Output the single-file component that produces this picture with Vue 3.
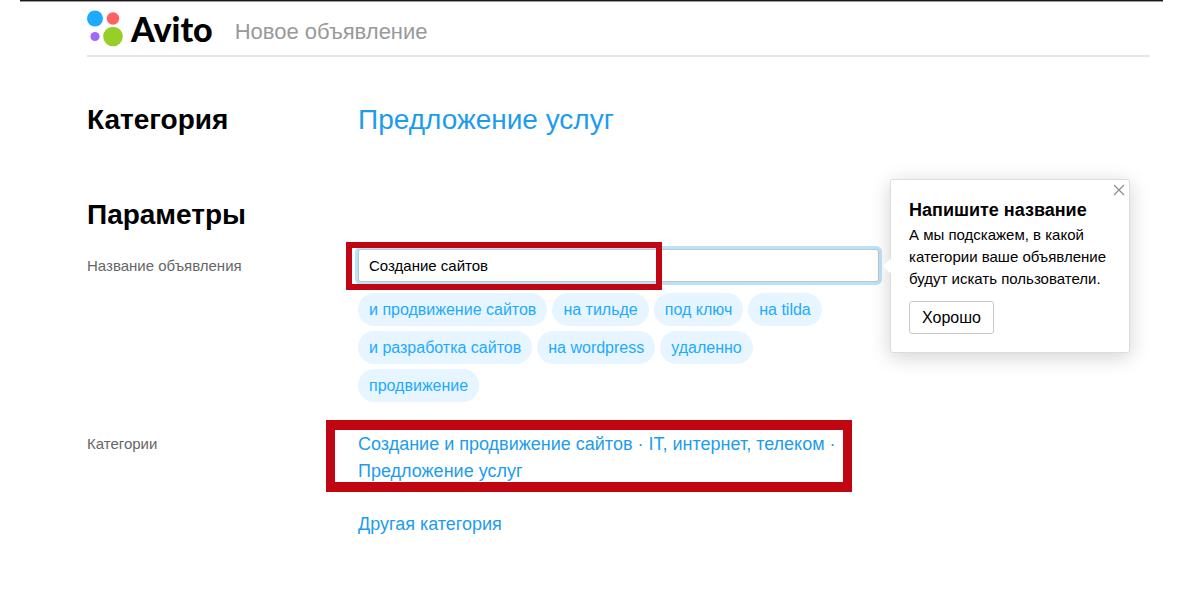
<template>
  <div class="page">
    <div class="top-line"></div>

    <!-- Header -->
    <header class="header">
      <a href="#" class="logo" @click.prevent>
        <svg class="logo-dots" width="37" height="37" viewBox="0 0 37 37" aria-hidden="true">
          <circle cx="8" cy="8.5" r="8" fill="#1eaaff" />
          <circle cx="26" cy="8.5" r="6.2" fill="#ff6163" />
          <circle cx="8" cy="26.5" r="4.6" fill="#a169f7" />
          <circle cx="26" cy="26.5" r="9.8" fill="#97cf26" />
        </svg>
        <span class="logo-name">Avito</span>
      </a>
      <span class="header-title">Новое объявление</span>
    </header>

    <main class="content">
      <!-- Category -->
      <section class="row category-row">
        <h2 class="heading">Категория</h2>
        <a href="#" class="category-link" @click.prevent>Предложение услуг</a>
      </section>

      <!-- Parameters -->
      <h2 class="heading params-heading">Параметры</h2>

      <section class="row">
        <label for="title" class="label title-label">Название объявления</label>
        <div>
          <div class="field">
            <input id="title" v-model="title" type="text" class="title-input" />
            <div class="mark mark-title"></div>

            <!-- Hint -->
            <div v-if="hintVisible" class="hint">
              <button type="button" class="hint-close" aria-label="Закрыть" @click="closeHint">
                <svg width="12" height="12" viewBox="0 0 12 12">
                  <path d="M1 1L11 11M11 1L1 11" stroke="#8c8c8c" stroke-width="1.2" fill="none" />
                </svg>
              </button>
              <h3 class="hint-title">Напишите название</h3>
              <p class="hint-text">А мы подскажем, в какой категории ваше объявление будут искать пользователи.</p>
              <button type="button" class="hint-ok" @click="closeHint">Хорошо</button>
            </div>
          </div>

          <div class="tags">
            <button v-for="tag in tags" :key="tag" type="button" class="tag" @click="addTag(tag)">{{ tag }}</button>
          </div>
        </div>
      </section>

      <section class="row categories-row">
        <span class="label categories-label">Категории</span>
        <div class="categories">
          <a href="#" class="link" @click.prevent>{{ path.join(' · ') }}</a>
          <a href="#" class="link" @click.prevent>Другая категория</a>
          <div class="mark mark-categories"></div>
        </div>
      </section>
    </main>
  </div>
</template>

<script setup>
import { ref } from 'vue'

const title = ref('Создание сайтов')
const hintVisible = ref(true)

const tags = [
  'и продвижение сайтов',
  'на тильде',
  'под ключ',
  'на tilda',
  'и разработка сайтов',
  'на wordpress',
  'удаленно',
  'продвижение'
]

const path = ['Создание и продвижение сайтов', 'IT, интернет, телеком', 'Предложение услуг']

// Methods
const addTag = (tag) => {
  title.value = `${title.value} ${tag}`
}

const closeHint = () => {
  hintVisible.value = false
}
</script>

<style>
body {
  margin: 0;
  background: #ffffff;
}
</style>

<style scoped>
.page {
  font-family: "Liberation Sans", Arial, sans-serif;
  font-size: 16px;
  color: #000000;
}

.page * {
  box-sizing: border-box;
}

a {
  color: #1d9cee;
  text-decoration: none;
}

button,
input {
  font: inherit;
}

button {
  cursor: pointer;
}

.top-line {
  height: 2px;
  margin: 0 17px 0 20px;
  background: #1b1819;
  border-bottom: 1px solid #9b999a;
  box-sizing: border-box;
}

/* Header */
.header {
  display: flex;
  align-items: center;
  gap: 22px;
  height: 55px;
  margin: 0 30px 0 87px;
  border-bottom: 2px solid #e6e6e6;
}

.logo {
  display: flex;
  align-items: center;
  gap: 7px;
  color: #000000;
}

.logo-dots {
  display: block;
}

.logo-name {
  font-family: Lato, sans-serif;
  font-size: 34px;
  font-weight: 900;
  line-height: 40px;
}

.header-title {
  padding-top: 7px;
  font-size: 22px;
  line-height: 26px;
  color: #999999;
}

/* Form */
.content {
  padding: 47px 30px 40px 87px;
}

.row {
  display: grid;
  grid-template-columns: 271px minmax(0, 1fr) 271px;
}

.heading {
  margin: 0;
  font-size: 28px;
  font-weight: 700;
  line-height: 32px;
}

.category-link {
  font-size: 28px;
  line-height: 32px;
}

.params-heading {
  margin-top: 63px;
  margin-bottom: 18px;
}

.label {
  color: #666666;
  font-size: 15px;
}

.title-label {
  line-height: 33px;
}

.field {
  position: relative;
}

.title-input {
  display: block;
  width: 100%;
  height: 33px;
  padding: 0 10px;
  border: 1px solid #c4c4c4;
  border-radius: 3px;
  outline: none;
  background: #ffffff;
  color: #000000;
  font-size: 15px;
  box-shadow: 0 0 0 3px #b9e3fb;
}

.tags {
  display: flex;
  flex-wrap: wrap;
  gap: 5px;
  margin-top: 11px;
  padding-right: 5px;
}

.tag {
  height: 33px;
  padding: 0 11px;
  border: none;
  border-radius: 17px;
  background: #e6f5ff;
  color: #1eaaff;
}

.categories-row {
  margin-top: 29px;
}

.categories-label {
  line-height: 26px;
}

.categories {
  position: relative;
  display: flex;
  flex-direction: column;
  align-items: flex-start;
  gap: 26px;
}

.link {
  font-size: 18px;
  line-height: 27px;
}

/* Red frames over the form */
.mark {
  position: absolute;
  border: 6px solid #c00613;
  pointer-events: none;
}

.mark-title {
  top: -7px;
  bottom: -8px;
  left: -12px;
  right: 217px;
}

.mark-categories {
  top: -11px;
  left: -32px;
  right: 27px;
  height: 72px;
  border-width: 10px 9px;
}

/* Hint */
.hint {
  position: absolute;
  top: -70px;
  left: calc(100% + 11px);
  width: 240px;
  padding: 18px 10px 18px 18px;
  border: 1px solid #dddddd;
  border-radius: 3px;
  background: #ffffff;
  box-shadow: 0 4px 20px rgba(0, 0, 0, 0.18);
}

.hint::before {
  content: "";
  position: absolute;
  top: 81px;
  left: -6px;
  width: 10px;
  height: 10px;
  background: #ffffff;
  transform: rotate(45deg);
}

.hint-close {
  position: absolute;
  top: 4px;
  right: 4px;
  padding: 0;
  border: none;
  background: none;
}

.hint-close svg {
  display: block;
}

.hint-title {
  margin: 0 0 2px;
  font-size: 18px;
  font-weight: 700;
  line-height: 24px;
}

.hint-text {
  margin: 0 0 11px;
  font-size: 15px;
  line-height: 22px;
}

.hint-ok {
  height: 33px;
  padding: 0 12px;
  border: 1px solid #c9c9c9;
  border-radius: 3px;
  background: #ffffff;
  color: #000000;
}
</style>
